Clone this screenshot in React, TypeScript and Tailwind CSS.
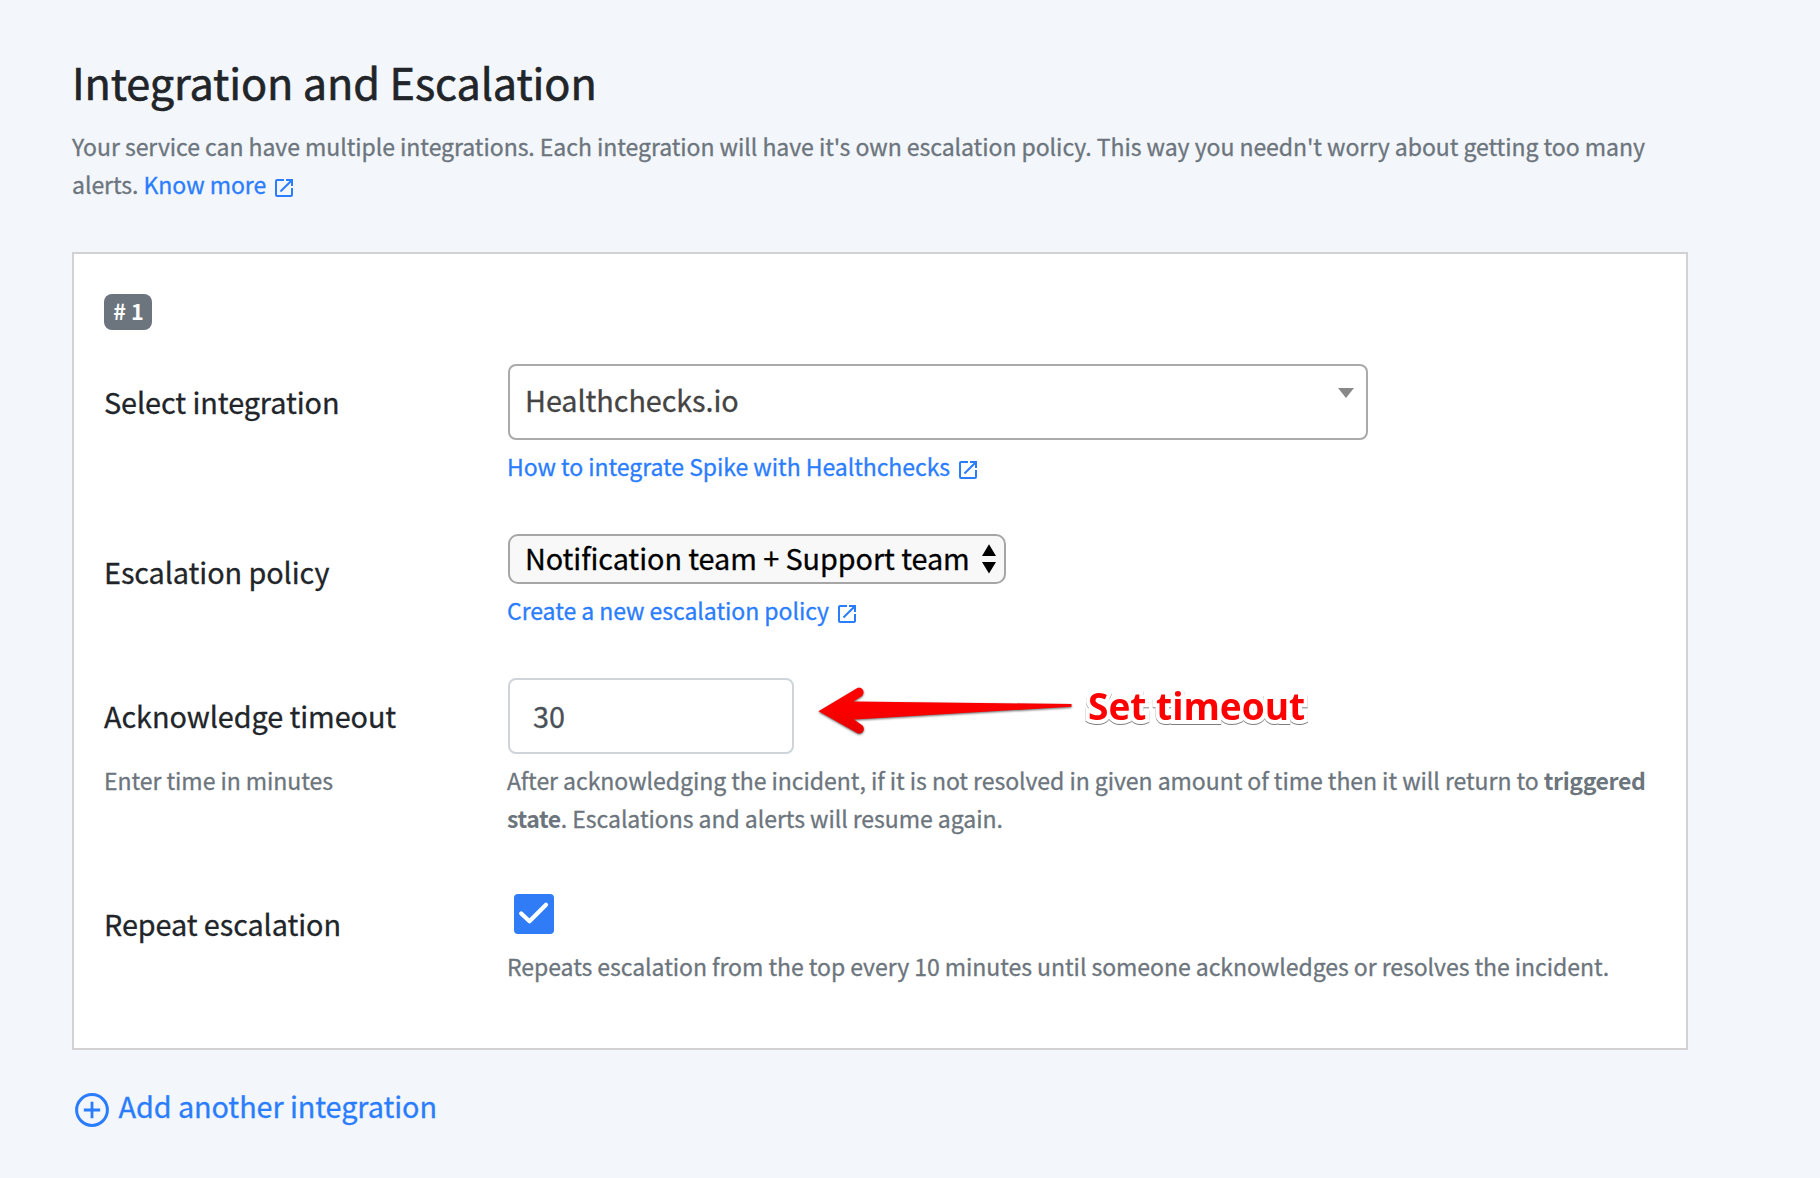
import type { ReactNode } from "react";

function ExternalIcon() {
  return (
    <svg viewBox="0 0 24 24" className="h-6 w-6 fill-current" aria-hidden="true">
      <path d="M19 19H5V5h7V3H5a2 2 0 0 0-2 2v14a2 2 0 0 0 2 2h14c1.1 0 2-.9 2-2v-7h-2v7zM14 3v2h3.59l-9.83 9.83 1.41 1.41L19 6.41V10h2V3h-7z" />
    </svg>
  );
}

function HelpLink({ children }: { children: ReactNode }) {
  return (
    <a className="inline-flex items-start text-[23.04px] leading-[38px] tracking-[-0.056px] text-[#2a7dff]">
      {children}
      <span className="mt-[11px] ml-[5.7px]">
        <ExternalIcon />
      </span>
    </a>
  );
}

function Row({
  label,
  hint,
  className,
  labelClass = "pt-[14px]",
  children,
}: {
  label: string;
  hint?: string;
  className?: string;
  labelClass?: string;
  children: ReactNode;
}) {
  return (
    <div className={`flex ${className ?? ""}`}>
      <div className={`w-[403px] shrink-0 ${labelClass}`}>
        <div className="text-[28.8px] leading-[48px] tracking-[-0.07px]">{label}</div>
        {hint && (
          <div className="mt-[21px] text-[23.04px] leading-[38px] tracking-[-0.056px] text-[#6c757d]">{hint}</div>
        )}
      </div>
      <div className="min-w-0 flex-1">{children}</div>
    </div>
  );
}

function TimeoutCallout() {
  return (
    <div className="absolute top-0 left-[308px] flex">
      <svg
        width="260"
        height="60"
        viewBox="0 0 260 60"
        className="mt-[2px] overflow-visible drop-shadow-[0_1px_1px_rgba(0,0,0,0.6)]"
        aria-hidden="true"
      >
        <defs>
          <linearGradient id="arrowFill" x1="0" y1="0" x2="0" y2="1">
            <stop offset="0" stopColor="#ff0000" />
            <stop offset="0.5" stopColor="#fa0000" />
            <stop offset="1" stopColor="#e60000" />
          </linearGradient>
        </defs>
        <path
          d="M3.5 31.3 L42 8.2 C46.5 6 51 11.5 47 16 L38.5 21.6 L256.5 24 L256.5 26.7 L39 39.4 L47.5 45.6 C51 49.5 47 55.5 42 53 Z"
          fill="url(#arrowFill)"
        />
      </svg>
      <div className="mt-[8px] ml-[13px] font-['Open_Sans',sans-serif] text-[37.1px] leading-[40px] font-bold whitespace-nowrap text-[#ff0000] drop-shadow-[0_1px_0.5px_rgba(0,0,0,0.5)] [-webkit-text-stroke:8px_white] [paint-order:stroke_fill] [stroke-linejoin:round]">
        Set timeout
      </div>
    </div>
  );
}

export default function App() {
  return (
    <div className="h-[1178px] w-[1820px] overflow-hidden bg-[#f3f6fb] pt-[52px] pl-[72px] font-['Noto_Sans_CJK_SC',sans-serif] text-[#212529] [-webkit-text-stroke:0.3px]">
      <h1 className="text-[43.2px] leading-[58px] tracking-[-0.1px] [-webkit-text-stroke:0.6px]">
        Integration and Escalation
      </h1>
      <p className="mt-[17px] text-[23.04px] leading-[38px] tracking-[-0.056px] whitespace-nowrap text-[#6c757d]">
        Your service can have multiple integrations. Each integration will have it's own escalation policy. This way you
        needn't worry about getting too many
        <br />
        <span className="flex">
          alerts.&nbsp;
          <HelpLink>Know more</HelpLink>
        </span>
      </p>

      <section className="mt-[49px] h-[798px] w-[1616px] border-2 border-[#d2d2d2] bg-white pt-[40px] pl-[30px]">
        <span className="flex h-9 w-12 items-center justify-center rounded-lg bg-[#6c757d] pb-[2px] pl-px text-[21.6px] leading-none font-bold text-white [-webkit-text-stroke:0]">
          # 1
        </span>

        <Row label="Select integration" className="mt-[34px]">
          <div className="ml-px flex h-[76px] w-[860px] justify-between rounded-lg border-2 border-[#aaa] pr-[12px] pl-[15px] text-[28.8px] leading-[68px] tracking-[-0.07px] text-[#444]">
            <span>Healthchecks.io</span>
            <svg width="16" height="10" viewBox="0 0 16 10" className="mt-[22px] fill-[#888]" aria-hidden="true">
              <path d="M0 0H16L8 10Z" />
            </svg>
          </div>
          <div className="mt-[7px] flex">
            <HelpLink>How to integrate Spike with Healthchecks</HelpLink>
          </div>
        </Row>

        <Row label="Escalation policy" className="mt-[49px]">
          <div className="ml-px flex h-[50px] w-[498px] justify-between rounded-[10px] border-2 border-[#a6a6a6] bg-[#f8f8f8] pr-[8px] pl-[15px] text-[28.8px] leading-[43px] tracking-[-0.07px] whitespace-nowrap text-black">
            <span>Notification team + Support team</span>
            <svg width="14" height="30" viewBox="0 0 14 30" className="mt-[8px] shrink-0 fill-black" aria-hidden="true">
              <path d="M0 12L7 0.3L14 12ZM0 18H14L7 29.5Z" />
            </svg>
          </div>
          <div className="mt-[7px] flex">
            <HelpLink>Create a new escalation policy</HelpLink>
          </div>
        </Row>

        <Row label="Acknowledge timeout" hint="Enter time in minutes" className="mt-[49px]">
          <div className="relative">
            <div className="ml-px h-[76px] w-[286px] rounded-lg border-2 border-[#ced4da] pl-[23px] text-[28.8px] leading-[72px] text-[#495057]">
              30
            </div>
            <TimeoutCallout />
          </div>
          <p className="mt-[7px] text-[23.04px] leading-[38px] tracking-[-0.056px] whitespace-nowrap text-[#6c757d]">
            After acknowledging the incident, if it is not resolved in given amount of time then it will return to{" "}
            <b className="tracking-[-0.4px] [-webkit-text-stroke:0]">triggered</b>
            <br />
            <b className="tracking-[-0.4px] [-webkit-text-stroke:0]">state</b>. Escalations and alerts will resume
            again.
          </p>
        </Row>

        <Row label="Repeat escalation" className="mt-[57px]" labelClass="pt-[6px]">
          <div className="ml-[7.3px] h-[39.5px] w-[39.5px] rounded-[4px] bg-[#2f7cf6]">
            <svg viewBox="0 0 39.5 39.5" className="h-full w-full" aria-hidden="true">
              <path
                d="M7.2 19.5L15.5 27.3L32 10.7"
                fill="none"
                stroke="white"
                strokeWidth="4.2"
                strokeLinecap="round"
                strokeLinejoin="round"
              />
            </svg>
          </div>
          <p className="mt-[13.5px] text-[23.04px] leading-[38px] tracking-[-0.056px] whitespace-nowrap text-[#6c757d]">
            Repeats escalation from the top every 10 minutes until someone acknowledges or resolves the incident.
          </p>
        </Row>
      </section>

      <a className="mt-[32px] flex text-[28.8px] leading-[48px] tracking-[-0.07px] text-[#2a7dff]">
        <svg
          width="34"
          height="34"
          viewBox="0 0 34 34"
          className="mt-[11px] mr-[9.5px] ml-[3px] fill-none stroke-current"
          aria-hidden="true"
        >
          <circle cx="17" cy="17" r="15.4" strokeWidth="3" />
          <path d="M8.8 17H25.2M17 8.8V25.2" strokeWidth="2.8" />
        </svg>
        Add another integration
      </a>
    </div>
  );
}
